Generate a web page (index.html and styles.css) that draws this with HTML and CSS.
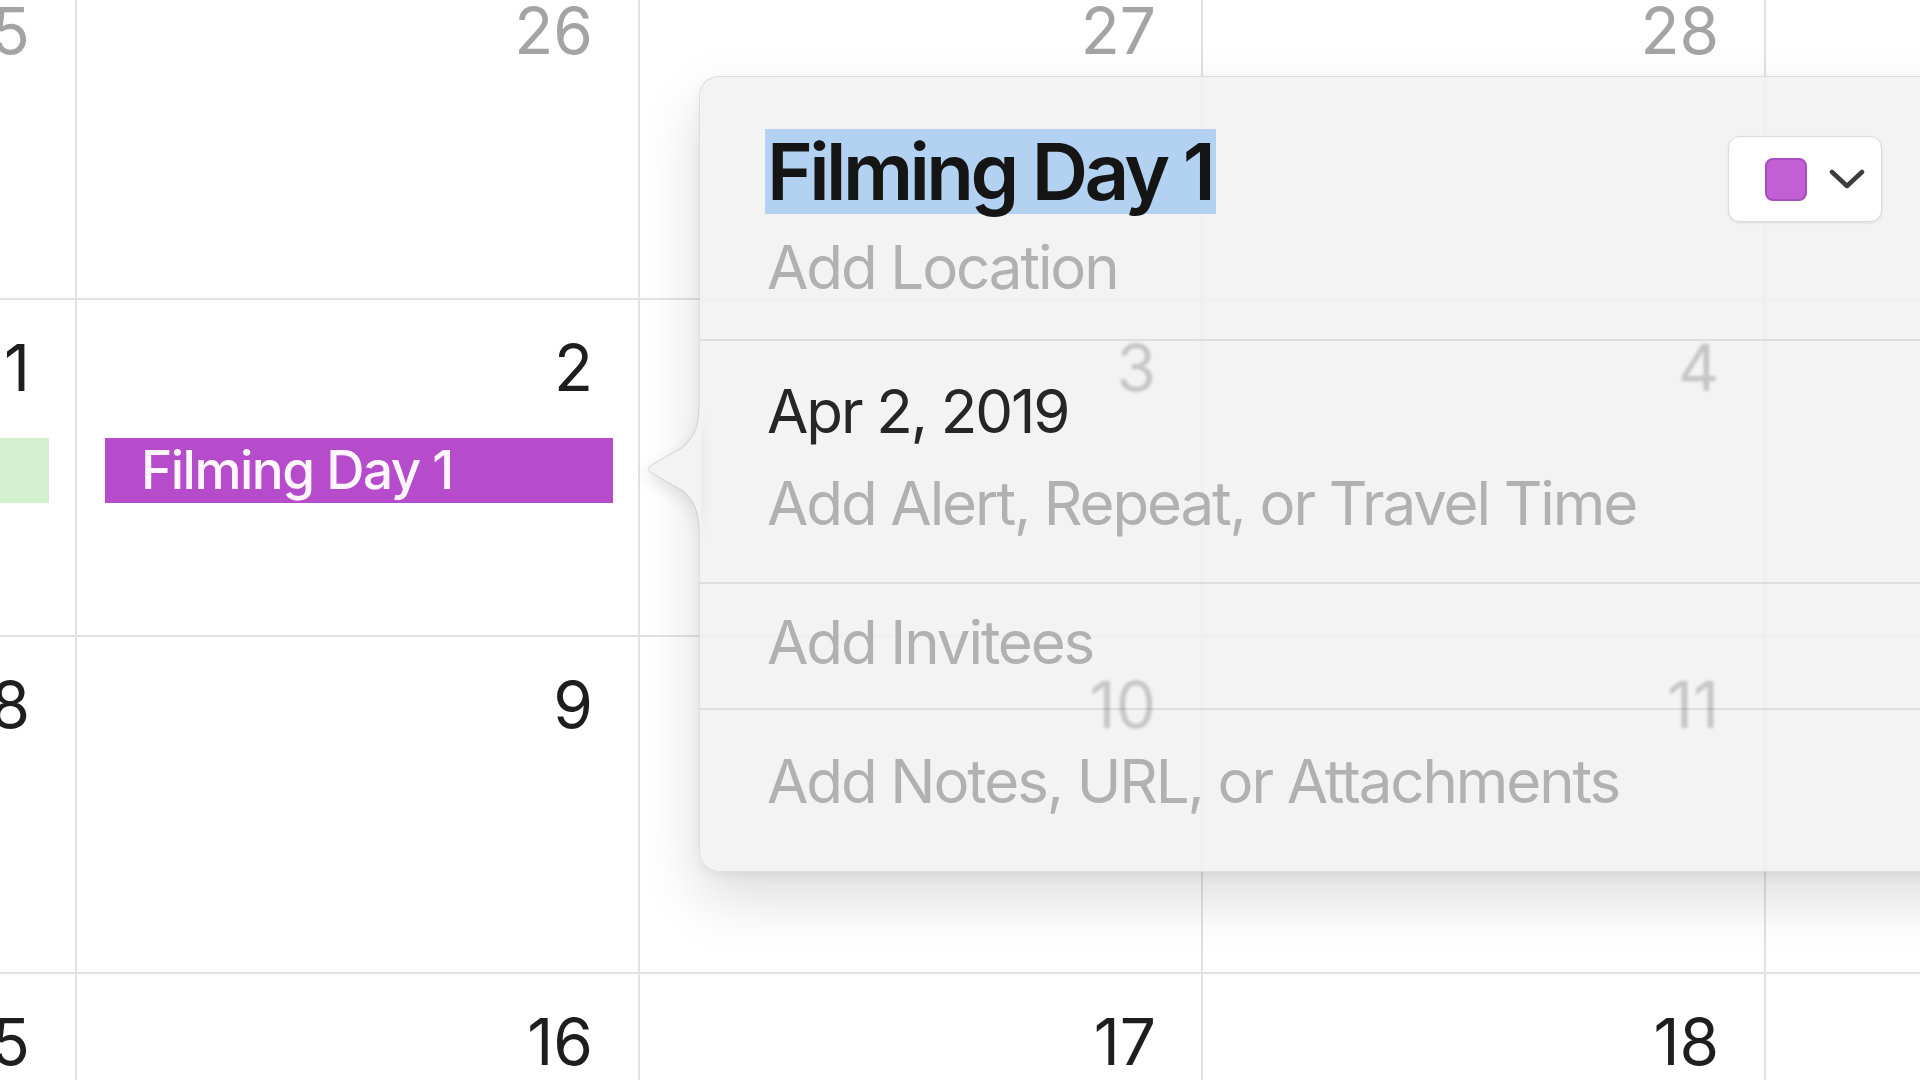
FILE: index.html
```html
<!DOCTYPE html>
<html lang="en">
<head>
<meta charset="utf-8">
<title>Calendar</title>
<link rel="stylesheet" href="styles.css">
</head>
<body>
<div class="month">
  <div class="cell"><div class="num prev">25</div></div>
  <div class="cell"><div class="num prev">26</div></div>
  <div class="cell"><div class="num prev">27</div></div>
  <div class="cell"><div class="num prev">28</div></div>
  <div class="cell"><div class="num prev">29</div></div>

  <div class="cell"><div class="num">1</div><div class="bar bar-green"></div></div>
  <div class="cell"><div class="num">2</div><div class="bar bar-purple">Filming Day 1</div></div>
  <div class="cell"><div class="num">3</div></div>
  <div class="cell"><div class="num">4</div></div>
  <div class="cell"><div class="num">5</div></div>

  <div class="cell"><div class="num">8</div></div>
  <div class="cell"><div class="num">9</div></div>
  <div class="cell"><div class="num">10</div></div>
  <div class="cell"><div class="num">11</div></div>
  <div class="cell"><div class="num">12</div></div>

  <div class="cell"><div class="num">15</div></div>
  <div class="cell"><div class="num">16</div></div>
  <div class="cell"><div class="num">17</div></div>
  <div class="cell"><div class="num">18</div></div>
  <div class="cell"><div class="num">19</div></div>
</div>

<div class="popover">
  <svg class="arrow" width="54" height="124" viewBox="0 0 54 124">
    <path class="arrow-fill" d="M54 0 L52 0 C52 22 46 30 36 40 L3 59 Q0 62 3 65 L36 84 C46 94 52 102 52 124 L54 124 Z"/>
    <path class="arrow-edge" d="M52 0 C52 22 46 30 36 40 L3 59 Q0 62 3 65 L36 84 C46 94 52 102 52 124"/>
  </svg>
  <div class="section head">
    <div class="title-row">
      <div class="title"><span class="sel">Filming Day 1</span></div>
      <div class="color-btn">
        <span class="swatch"></span>
        <svg class="chev" width="36" height="24" viewBox="0 0 36 24"><polyline points="3,5 18,19 33,5"/></svg>
      </div>
    </div>
    <div class="line placeholder loc">Add Location</div>
  </div>
  <div class="section when">
    <div class="line date">Apr 2, 2019</div>
    <div class="line placeholder alert">Add Alert, Repeat, or Travel Time</div>
  </div>
  <div class="section invitees">
    <div class="line placeholder">Add Invitees</div>
  </div>
  <div class="section notes">
    <div class="line placeholder">Add Notes, URL, or Attachments</div>
  </div>
</div>
</body>
</html>
```

FILE: styles.css
```css
html, body {
  margin: 0;
  padding: 0;
}
body {
  width: 1920px;
  height: 1080px;
  overflow: hidden;
  background: #ffffff;
  font-family: Inter, "Noto Sans", "Liberation Sans", sans-serif;
  position: relative;
}
.month {
  display: grid;
  grid-template-columns: repeat(5, 563px);
  grid-template-rows: repeat(4, 337px);
  margin: -37px 0 0 -486px;
  width: 2815px;
}
.cell {
  box-sizing: border-box;
  border-right: 2px solid #e2e2e2;
  border-bottom: 2px solid #e2e2e2;
  display: flex;
  flex-direction: column;
}
.num {
  font-size: 64px;
  line-height: 64px;
  padding: 36px 45px 0 0;
  text-align: right;
  color: #1e1e1e;
}
.num.prev {
  color: #a4a4a4;
}
.bar {
  height: 65px;
  margin: 38px 25px 0 28px;
  box-sizing: border-box;
}
.bar-green {
  background: #d3f1cf;
  margin-right: 26px;
}
.bar-purple {
  background: #b64bcc;
  color: #fff6ff;
  font-size: 53px;
  font-weight: 500;
  line-height: 65px;
  padding-left: 36px;
  letter-spacing: -1.5px;
  white-space: nowrap;
}
.popover {
  position: absolute;
  left: 699px;
  top: 76px;
  width: 1300px;
  height: 796px;
  box-sizing: border-box;
  border-radius: 20px;
  background: rgba(240, 240, 240, 0.8);
  backdrop-filter: blur(1.5px);
  border: 1px solid rgba(0, 0, 0, 0.09);
  box-shadow: 0 26px 60px rgba(0, 0, 0, 0.14), 0 4px 14px rgba(0, 0, 0, 0.06);
  color: #1c1c1c;
}
.arrow {
  position: absolute;
  left: -53px;
  top: 330px;
  z-index: 2;
  filter: drop-shadow(-3px 6px 8px rgba(0, 0, 0, 0.10));
}
.arrow-fill {
  fill: #f3f3f3;
}
.arrow-edge {
  fill: none;
  stroke: rgba(0, 0, 0, 0.10);
  stroke-width: 1.2;
}
.section {
  padding-left: 67px;
  border-top: 2px solid rgba(0, 0, 0, 0.085);
}
.section.head {
  border-top: none;
  padding-top: 52px;
  padding-bottom: 36px;
  padding-right: 116px;
}
.title-row {
  display: flex;
  justify-content: space-between;
  align-items: flex-start;
  height: 85px;
}
.title {
  font-size: 78px;
  font-weight: 600;
  line-height: 85px;
  letter-spacing: -3.6px;
  margin-left: -2px;
}
.sel {
  display: inline-block;
  background: #b3d1f1;
  padding: 0 4px 0 2px;
  color: #151515;
}
.color-btn {
  margin-top: 7px;
  width: 154px;
  height: 86px;
  box-sizing: border-box;
  background: #ffffff;
  border: 1px solid #d9d9d9;
  border-radius: 12px;
  box-shadow: 0 1px 3px rgba(0, 0, 0, 0.10);
  display: flex;
  align-items: center;
  padding-left: 36px;
  gap: 22px;
}
.swatch {
  width: 42px;
  height: 43px;
  box-sizing: border-box;
  border-radius: 8px;
  background: #c25fd5;
  border: 2px solid #a94cbf;
}
.chev polyline {
  fill: none;
  stroke: #3c3c3c;
  stroke-width: 4.5;
  stroke-linecap: round;
  stroke-linejoin: round;
}
.line {
  font-size: 60px;
  line-height: 72px;
  white-space: nowrap;
  letter-spacing: -2.1px;
}
.placeholder {
  color: #b1b1b1;
}
.loc {
  margin-top: 17px;
}
.section.when {
  padding-top: 34px;
  padding-bottom: 43px;
}
.date {
  color: #262626;
}
.alert {
  margin-top: 20px;
}
.section.invitees {
  padding-top: 22px;
  padding-bottom: 30px;
}
.section.notes {
  padding-top: 35px;
}
```
